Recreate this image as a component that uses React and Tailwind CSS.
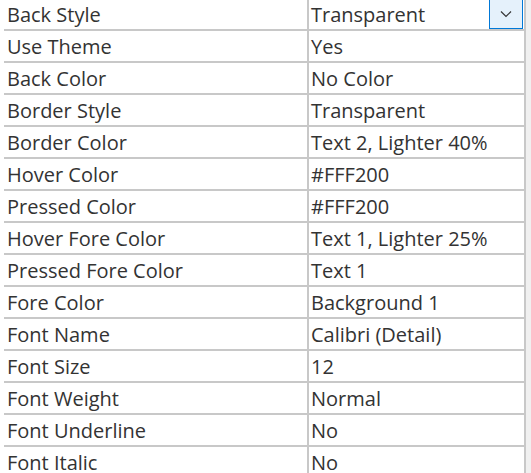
const rows = [
  ["Back Style", "Transparent"],
  ["Use Theme", "Yes"],
  ["Back Color", "No Color"],
  ["Border Style", "Transparent"],
  ["Border Color", "Text 2, Lighter 40%"],
  ["Hover Color", "#FFF200"],
  ["Pressed Color", "#FFF200"],
  ["Hover Fore Color", "Text 1, Lighter 25%"],
  ["Pressed Fore Color", "Text 1"],
  ["Fore Color", "Background 1"],
  ["Font Name", "Calibri (Detail)"],
  ["Font Size", "12"],
  ["Font Weight", "Normal"],
  ["Font Underline", "No"],
  ["Font Italic", "No"],
];

export default function App() {
  return (
    <div
      className="w-[531px] h-[473px] overflow-hidden bg-white flex text-[#333] text-[20px]"
      style={{ fontFamily: '"Open Sans", "Noto Sans", sans-serif' }}
    >
      <div className="w-[4px] shrink-0" />
      <div className="w-[522px] shrink-0 border-r-2 border-[#c8c8c8] -mt-px">
        {rows.map(([name, value], i) => (
          <div key={name} className="flex h-[32px] border-b-2 border-[#c8c8c8]">
            <div className="w-[305px] shrink-0 pl-[3px] pt-[2px] leading-[28px] border-r-2 border-[#c8c8c8] whitespace-nowrap">
              {name}
            </div>
            <div className="flex-1 flex items-start pl-[2px] pt-[2px] leading-[28px] whitespace-nowrap">
              <span className="flex-1">{value}</span>
              {i === 0 && (
                <div className="-mt-[2px] mr-[1px] w-[34px] h-[30px] bg-[#e5f1fb] border border-[#0078d7] flex items-center justify-center">
                  <svg width="12" height="8" viewBox="0 0 12 8" fill="none">
                    <path d="M1 1.5 L6 6.5 L11 1.5" stroke="#333" strokeWidth="1.2" />
                  </svg>
                </div>
              )}
            </div>
          </div>
        ))}
      </div>
      <div className="flex-1 bg-[#f0f0f0]" />
    </div>
  );
}
